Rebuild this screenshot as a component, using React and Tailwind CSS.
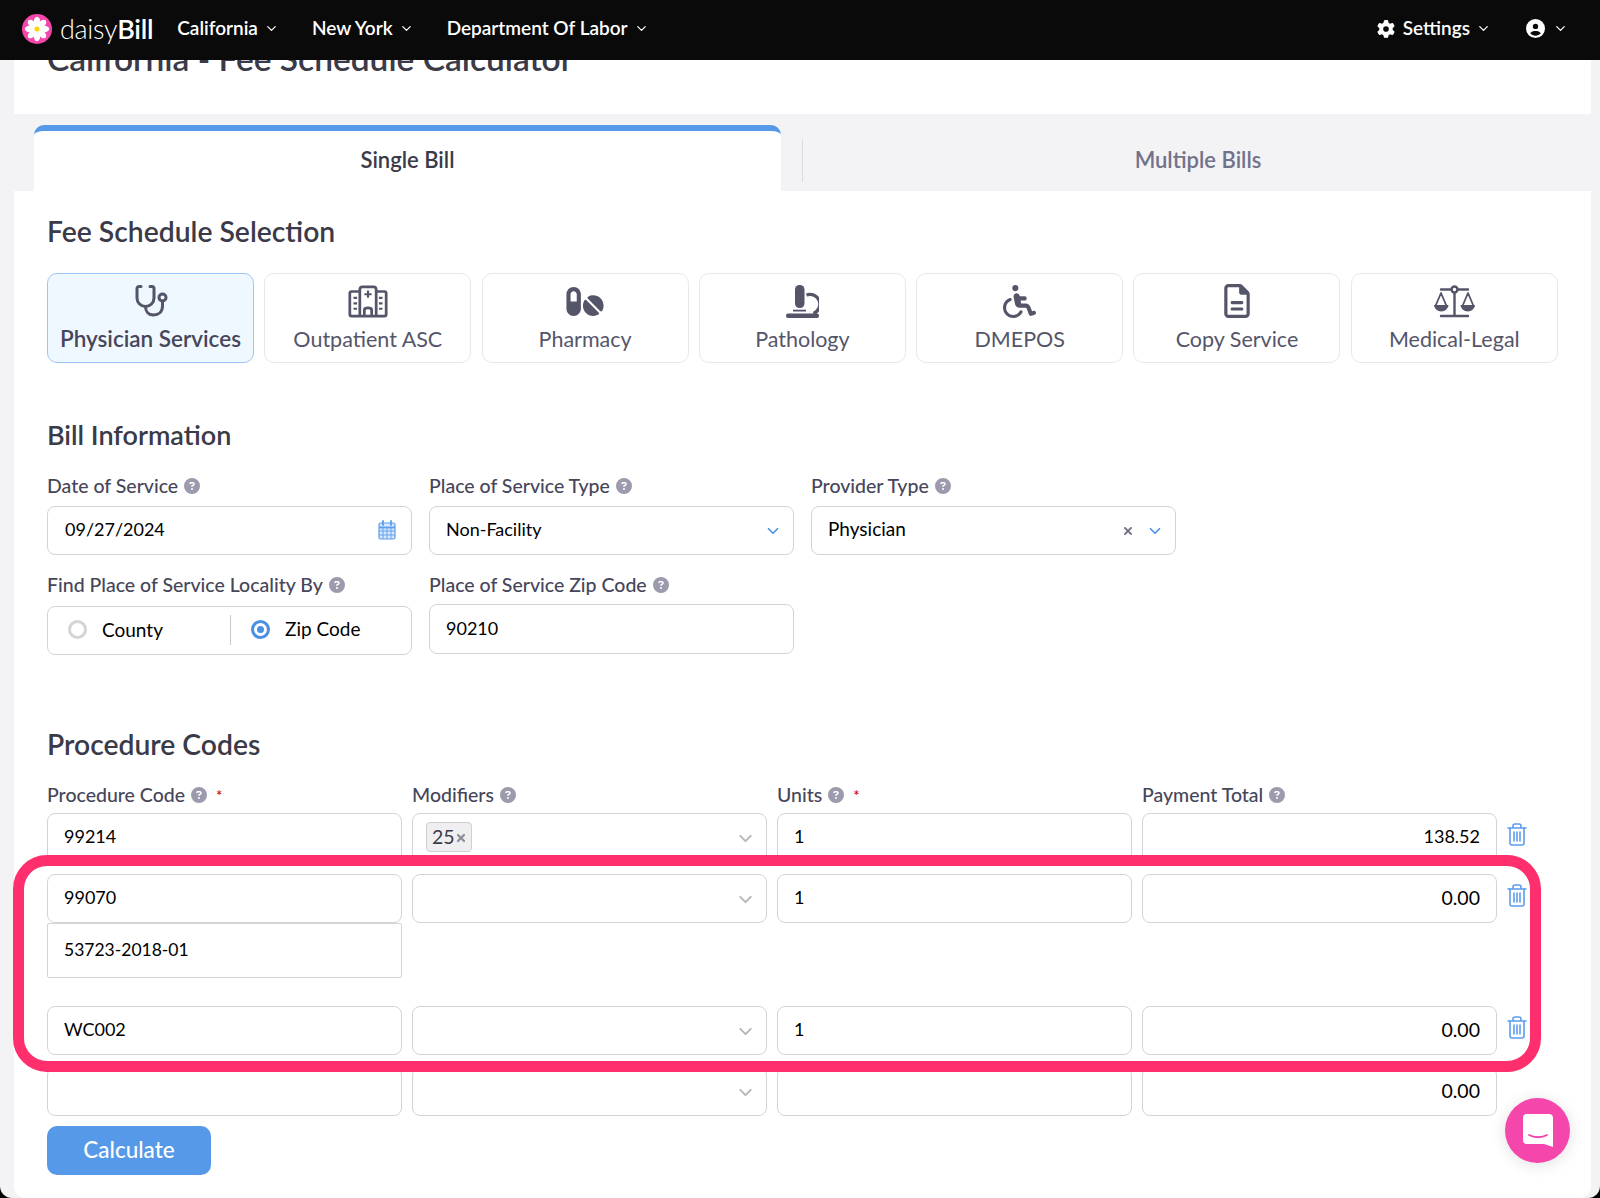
import { ChevronDown, X } from 'lucide-react'
import { FaPills, FaWheelchair, FaRegFileLines, FaCircleQuestion, FaGear, FaCircleUser } from 'react-icons/fa6'

function Help() {
  return <FaCircleQuestion className="ml-[6px] inline-block text-[16px] text-[#9b9bad]" />
}

function Label({ text, required }) {
  return (
    <div className="flex items-center text-[19.500px] leading-[22px] font-medium text-[#46465a]">
      {text}
      <Help />
      {required && <span className="ml-[9px] text-[15px] text-[#d0021b]">*</span>}
    </div>
  )
}

function Stethoscope() {
  return (
    <svg viewBox="0 0 34 34" className="h-[34px] w-[34px]" fill="none" stroke="#55556a" strokeWidth="3" strokeLinecap="round">
      <path d="M7 2.500H5a2 2 0 0 0-2 2V14a8.500 8.500 0 0 0 17 0V4.500a2 2 0 0 0-2-2h-2" />
      <path d="M11.500 22.500c0 5 3 8.500 8 8.500s9-3 9-9v-5" />
      <circle cx="28.500" cy="13.500" r="3.500" />
    </svg>
  )
}

function Hospital() {
  return (
    <svg viewBox="0 0 44 36" className="h-[33px] w-[40px]" fill="none" stroke="#55556a" strokeWidth="3" strokeLinejoin="round">
      <path d="M13 34V5c0-2 1-3 3-3h12c2 0 3 1 3 3v29" />
      <path d="M13 7H4C2.500 7 2 8 2 9v23c0 1 .5 2 2 2h36c1.500 0 2-1 2-2V9c0-1-.5-2-2-2h-9" />
      <path d="M18 34v-7c0-1 1-2 4-2s4 1 4 2v7" />
      <path d="M22 6v8M18 10h8M6 14h4M6 20h4M6 26h4M34 14h4M34 20h4M34 26h4" strokeWidth="2.400" />
    </svg>
  )
}

function Microscope() {
  return (
    <svg viewBox="0 0 33 33" className="h-[33px] w-[33px]" fill="#55556a">
      <rect x="9" y="0" width="9.500" height="23" rx="4.500" />
      <rect x="7" y="24.700" width="13" height="1.800" />
      <rect x="0" y="28.500" width="33" height="4.500" rx="2" />
      <path d="M20.500 10a9.500 9.500 0 0 1 7 18.500" fill="none" stroke="#55556a" strokeWidth="3.400" />
    </svg>
  )
}

function Scale() {
  return (
    <svg viewBox="0 0 41 33" className="h-[33px] w-[41px]" fill="none" stroke="#55556a" strokeWidth="2.400">
      <circle cx="20.500" cy="4.500" r="3" />
      <path d="M7 4.500h10.500M23.500 4.500H34M20.500 8v23M7 31h27" strokeLinecap="round" />
      <path d="M7 8L1.500 21h11zM34 8l-5.500 13h11z" strokeWidth="1.800" strokeLinejoin="round" />
      <path d="M0 20h14.500a7.250 6.500 0 0 1-14.500 0zM26.500 20H41a7.250 6.500 0 0 1-14.500 0z" fill="#55556a" stroke="none" />
    </svg>
  )
}

function Trash() {
  return (
    <svg viewBox="0 0 20 23" className="mt-[10px] h-[23px] w-[20px]" fill="none" stroke="#5c9dee" strokeWidth="1.600" strokeLinecap="round">
      <path d="M1 5h18M6 5V3a2 2 0 0 1 2-2h4a2 2 0 0 1 2 2v2" />
      <path d="M3 5v15a2 2 0 0 0 2 2h10a2 2 0 0 0 2-2V5" />
      <path d="M7 9v9M10 9v9M13 9v9" />
    </svg>
  )
}

function CalendarIcon() {
  return (
    <svg viewBox="0 0 18 20" className="h-[20px] w-[18px]" fill="none" stroke="#5c9dee" strokeWidth="1.200">
      <rect x="1" y="3" width="16" height="16" rx="1.500" fill="#d6e7fb" />
      <path d="M1 7.500h16" strokeWidth="1.800" />
      <path d="M5 1v4M13 1v4" strokeWidth="1.800" strokeLinecap="round" />
      <path d="M1 11h16M1 15h16M5 7.500V19M9 7.500V19M13 7.500V19" strokeWidth="0.900" />
    </svg>
  )
}

const cards = [
  { name: 'Physician Services', icon: <Stethoscope />, active: true },
  { name: 'Outpatient ASC', icon: <Hospital /> },
  { name: 'Pharmacy', icon: <FaPills className="h-[33px] w-[38px] text-[#55556a]" /> },
  { name: 'Pathology', icon: <Microscope /> },
  { name: 'DMEPOS', icon: <FaWheelchair className="h-[33px] w-[33px] text-[#55556a]" /> },
  { name: 'Copy Service', icon: <FaRegFileLines className="h-[34px] w-[26px] text-[#55556a]" /> },
  { name: 'Medical-Legal', icon: <Scale /> },
]

function NavItem({ children }) {
  return (
    <div className="flex items-center gap-[6px] text-[19px] font-semibold text-white">
      {children}
      <ChevronDown size={15} strokeWidth={2} />
    </div>
  )
}

function Box({ children, className = '' }) {
  return (
    <div className={`flex items-center rounded-[8px] border border-[#d4d4d8] bg-white pb-[2px] text-[18px] text-black ${className}`}>
      {children}
    </div>
  )
}

function Code({ value }) {
  return <Box className="h-[49px] px-[16px]">{value}</Box>
}

function Mods({ tag }) {
  return (
    <Box className="h-[49px] justify-between pr-[10px] pl-[13px]">
      {tag ? (
        <span className="flex h-[30px] items-center rounded-[4px] border border-[#cfcfd4] bg-[#efeff1] pl-[5px] pr-[4px] text-[19.500px] text-[#3c3c46]">
          {tag}
          <X size={12} strokeWidth={4.500} className="mt-[2px] text-[#8e8e96]" />
        </span>
      ) : <span />}
      <ChevronDown size={21} strokeWidth={2.200} className="mt-[3px] text-[#b5b5ba]" />
    </Box>
  )
}

function Row({ code, tag, units, total, sub, trash = true }) {
  return (
    <div className="flex gap-[10px]">
      <div className="w-[355px]">
        <Code value={code} />
        {sub && <div className="mb-[16px] flex h-[55px] items-center rounded-[2px] border border-[#d4d4d8] px-[16px] text-[17.500px] text-black">{sub}</div>}
      </div>
      <div className="w-[355px]"><Mods tag={tag} /></div>
      <div className="w-[355px]"><Code value={units} /></div>
      <div className="w-[355px]"><Box className={`h-[49px] justify-end px-[16px] ${total === '0.00' ? 'text-[19.500px]' : ''}`}>{total}</Box></div>
      {trash && <Trash />}
    </div>
  )
}

export default function App() {
  return (
    <div className="h-[1198px] w-[1600px] overflow-hidden bg-black">
      <div className="relative h-[1198px] overflow-hidden rounded-b-[12px] bg-[#f3f3f6] font-['Lato',sans-serif]">
        <header className="relative z-10 flex h-[60px] items-center bg-[#0a0a0a] pb-[3px] pl-[22px] pr-[32px]">
          <svg viewBox="0 0 30 30" className="h-[30px] w-[30px]">
            <circle cx="15" cy="15" r="15" fill="#f546ab" />
            {[0, 45, 90, 135, 180, 225, 270, 315].map((a) => (
              <ellipse key={a} cx="15" cy="8" rx="3.200" ry="5.200" fill="white" transform={`rotate(${a} 15 15)`} />
            ))}
            <circle cx="15" cy="15" r="2.500" fill="#ffd400" />
          </svg>
          <div className="ml-[8px] mr-[24px] text-[27px] leading-none tracking-[-0.300px] text-white">
            <span className="font-light">daisy</span><span className="font-semibold">Bill</span>
          </div>
          <div className="flex items-center gap-[33px]">
            <NavItem>California</NavItem>
            <NavItem>New York</NavItem>
            <NavItem>Department Of Labor</NavItem>
          </div>
          <div className="ml-auto flex items-center gap-[35px]">
            <NavItem><FaGear className="mr-[2px] text-[18px]" />Settings</NavItem>
            <NavItem><FaCircleUser className="mr-[2px] text-[19px]" /></NavItem>
          </div>
        </header>

        <div className="ml-[14px] mr-[9px] h-[54px] overflow-hidden bg-white">
          <h1 className="-mt-[21px] pl-[33px] text-[33.500px] leading-[38px] font-semibold whitespace-nowrap text-[#3a3a48]">California - Fee Schedule Calculator</h1>
        </div>

        <div className="flex h-[77px] items-end pl-[34px]">
          <div className="flex h-[66px] w-[747px] items-center justify-center rounded-t-[10px] border-t-[6px] border-[#5599e8] bg-white pb-[3px] text-[22px] font-semibold text-[#3a3a48]">Single Bill</div>
          <div className="mb-[9px] ml-[21px] h-[43px] w-px bg-[#dcdce0]" />
          <div className="mb-[9px] flex h-[43px] w-[790px] items-center justify-center pb-[2px] text-[22px] font-semibold text-[#72728a]">Multiple Bills</div>
        </div>

        <main className="ml-[14px] mr-[9px] h-[1007px] rounded-b-[12px] bg-white pl-[33px]">
          <h2 className="pt-[23px] text-[28.300px] leading-[34px] font-semibold text-[#3a3a48]">Fee Schedule Selection</h2>
          <div className="mt-[25px] flex gap-[10.300px]">
            {cards.map((c) => (
              <div key={c.name} className={`flex h-[90px] w-[207px] flex-col items-center justify-end rounded-[10px] border pb-[8px] ${c.active ? 'border-[#9cc6f5] bg-[#f0f8ff] text-[22.500px] font-semibold text-[#46465a]' : 'border-[#e8e8eb] text-[21.500px] text-[#55556a]'}`}>
                <div className="flex h-[36px] items-center">{c.icon}</div>
                <div className="mt-[5px] leading-[30px]">{c.name}</div>
              </div>
            ))}
          </div>

          <h2 className="mt-[55px] text-[27px] leading-[34px] font-semibold text-[#3a3a48]">Bill Information</h2>
          <div className="mt-[23px] grid w-[1129px] grid-cols-3 gap-x-[17px]">
            <div>
              <Label text="Date of Service" />
              <Box className="mt-[9px] h-[49px] justify-between pl-[17px] pr-[15px]">09/27/2024<CalendarIcon /></Box>
            </div>
            <div>
              <Label text="Place of Service Type" />
              <Box className="mt-[9px] h-[49px] justify-between pl-[16px] pr-[11px] text-[18.700px] text-[#46465a]">Non-Facility<ChevronDown size={18} strokeWidth={2.200} className="mt-[3px] text-[#4a90e2]" /></Box>
            </div>
            <div>
              <Label text="Provider Type" />
              <Box className="mt-[9px] h-[49px] justify-between pl-[16px] pr-[11px] text-[19px] text-[#46465a]">Physician
                <span className="mt-[3px] flex items-center gap-[12px]">
                  <X size={12} strokeWidth={4} className="text-[#77778a]" />
                  <ChevronDown size={18} strokeWidth={2.200} className="text-[#4a90e2]" />
                </span>
              </Box>
            </div>
            <div className="mt-[19px]">
              <Label text="Find Place of Service Locality By" />
              <Box className="mt-[10px] h-[49px] text-[19px] text-[#46465a]">
                <div className="flex w-[183px] items-center border-r border-[#c9c9ce] pl-[20px] leading-[30px]">
                  <span className="h-[19px] w-[19px] rounded-full border-[3px] border-[#d4d4d8]" />
                  <span className="ml-[15px]">County</span>
                </div>
                <div className="flex items-center pl-[20px]">
                  <span className="flex h-[19px] w-[19px] items-center justify-center rounded-full border-[3px] border-[#4a90e2]"><span className="h-[7px] w-[7px] rounded-full bg-[#4a90e2]" /></span>
                  <span className="ml-[15px]">Zip Code</span>
                </div>
              </Box>
            </div>
            <div className="mt-[19px]">
              <Label text="Place of Service Zip Code" />
              <Box className="mt-[8px] h-[50px] px-[16px]">90210</Box>
            </div>
          </div>

          <h2 className="mt-[72px] text-[28.300px] leading-[34px] font-semibold text-[#3a3a48]">Procedure Codes</h2>
          <div className="mt-[23px] flex gap-[10px]">
            <div className="w-[355px]"><Label text="Procedure Code" required /></div>
            <div className="w-[355px]"><Label text="Modifiers" /></div>
            <div className="w-[355px]"><Label text="Units" required /></div>
            <div className="w-[355px]"><Label text="Payment Total" /></div>
          </div>
          <div className="mt-[7px] flex flex-col gap-[12px]">
            <Row code="99214" tag="25" units="1" total="138.52" />
            <Row code="99070" units="1" total="0.00" sub="53723-2018-01" />
            <Row code="WC002" units="1" total="0.00" />
            <Row total="0.00" trash={false} />
          </div>
          <button className="mt-[10px] h-[49px] w-[164px] rounded-[10px] bg-[#5599e8] pb-[2px] text-[22.500px] font-medium text-white">Calculate</button>
        </main>

        <div className="absolute left-[13px] top-[855px] h-[217px] w-[1528px] rounded-[34px] border-[11px] border-[#ff2f6e]" />

        <div className="absolute left-[1505px] top-[1098px] flex h-[65px] w-[65px] items-center justify-center rounded-full bg-[#f546ab] shadow-[0_2px_16px_rgba(0,0,0,0.12)]">
          <svg viewBox="0 0 30 33" className="h-[33px] w-[30px]">
            <path d="M4 0h22a4 4 0 0 1 4 4v29l-9-3H4a4 4 0 0 1-4-4V4a4 4 0 0 1 4-4z" fill="white" />
            <path d="M6 21c5 3 13 3 18 0" stroke="#f546ab" strokeWidth="1.800" fill="none" strokeLinecap="round" />
          </svg>
        </div>
      </div>
    </div>
  )
}
